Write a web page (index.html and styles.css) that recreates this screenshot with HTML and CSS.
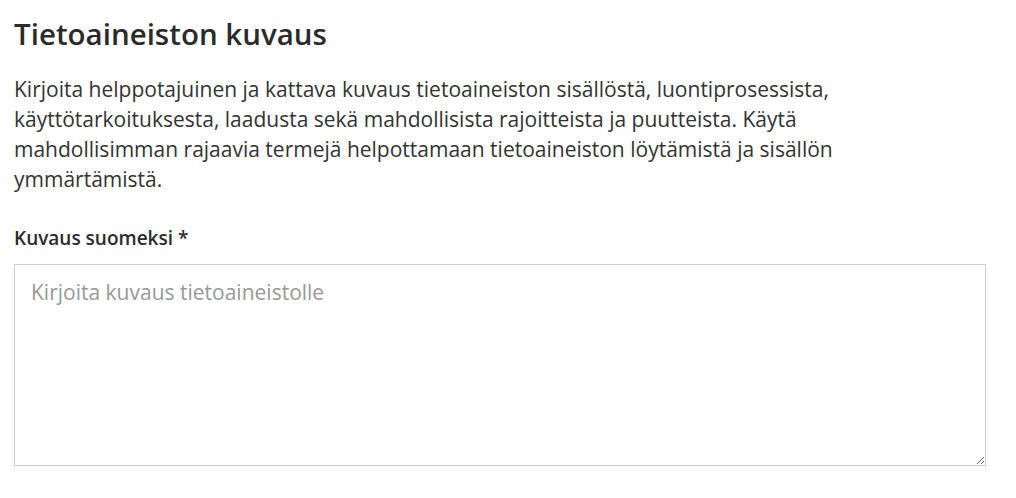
FILE: index.html
```html
<!DOCTYPE html>
<html lang="fi">
<head>
<meta charset="utf-8">
<title>Tietoaineiston kuvaus</title>
<link rel="stylesheet" href="styles.css">
</head>
<body>
<main class="page">
  <h1 class="title">Tietoaineiston kuvaus</h1>
  <p class="intro">Kirjoita helppotajuinen ja kattava kuvaus tietoaineiston sisällöstä, luontiprosessista, käyttötarkoituksesta, laadusta sekä mahdollisista rajoitteista ja puutteista. Käytä mahdollisimman rajaavia termejä helpottamaan tietoaineiston löytämistä ja sisällön ymmärtämistä.</p>
  <div class="field">
    <label class="label" for="desc-fi">Kuvaus suomeksi *</label>
    <textarea id="desc-fi" class="textarea" placeholder="Kirjoita kuvaus tietoaineistolle"></textarea>
  </div>
  <div class="field field-next">
    <label class="label" for="desc-sv">Kuvaus ruotsiksi</label>
  </div>
</main>
</body>
</html>
```

FILE: styles.css
```css
html, body {
  margin: 0;
  padding: 0;
  background: #ffffff;
}

body {
  font-family: "Open Sans", "Noto Sans", sans-serif;
  color: #333333;
}

.page {
  padding: 16px 30px 0 14px;
  display: flex;
  flex-direction: column;
}

.title {
  margin: 0;
  font-size: 29.5px;
  line-height: 36px;
  font-weight: 600;
  color: #2b2b2b;
}

.intro {
  margin: 22px 0 0 0;
  max-width: 940px;
  font-size: 21px;
  line-height: 30px;
  color: #333333;
}

.field {
  display: flex;
  flex-direction: column;
  margin-top: 31px;
}

.field-next {
  margin-top: 27px;
}

.label {
  font-size: 19px;
  line-height: 26px;
  font-weight: 600;
  color: #2b2b2b;
  margin-bottom: 13px;
}

.textarea {
  box-sizing: border-box;
  width: 972px;
  height: 202px;
  margin-left: 0;
  border: 1px solid #cccccc;
  border-radius: 0;
  padding: 12px 16px;
  font-family: "Open Sans", "Noto Sans", sans-serif;
  font-size: 21px;
  line-height: 30px;
  color: #333333;
  resize: vertical;
  outline: none;
}

.textarea::placeholder {
  color: #999999;
  opacity: 1;
}
```
